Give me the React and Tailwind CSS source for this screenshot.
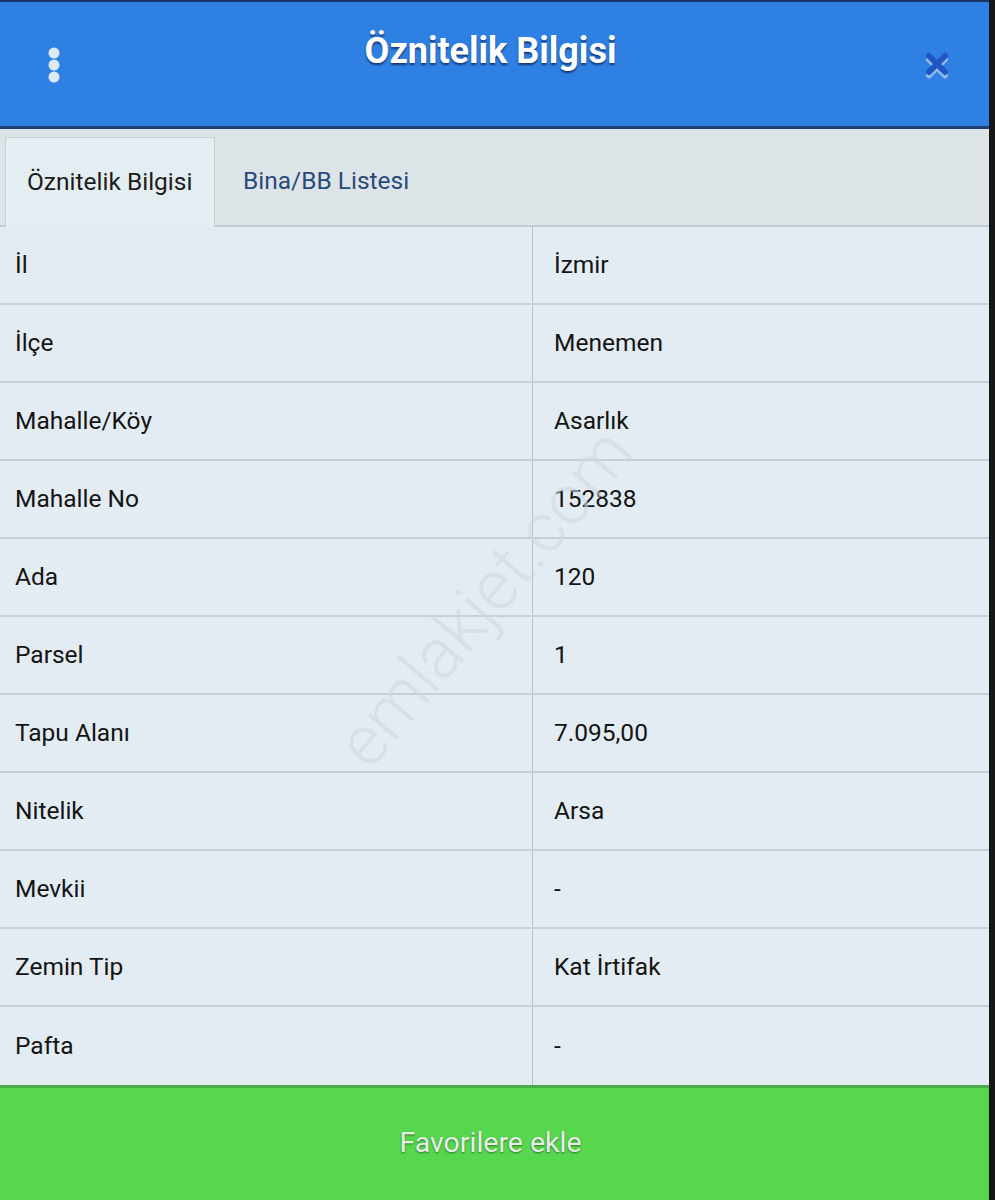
import React from 'react'

const rows = [
  ['İl', 'İzmir'],
  ['İlçe', 'Menemen'],
  ['Mahalle/Köy', 'Asarlık'],
  ['Mahalle No', '152838'],
  ['Ada', '120'],
  ['Parsel', '1'],
  ['Tapu Alanı', '7.095,00'],
  ['Nitelik', 'Arsa'],
  ['Mevkii', '-'],
  ['Zemin Tip', 'Kat İrtifak'],
  ['Pafta', '-'],
]

function KebabIcon() {
  return (
    <svg width="14" height="38" viewBox="0 0 14 38">
      <circle cx="7" cy="7" r="5.5" fill="#dce9f7" />
      <circle cx="7" cy="19" r="5.5" fill="#dce9f7" />
      <circle cx="7" cy="31" r="5.5" fill="#dce9f7" />
    </svg>
  )
}

function CloseIcon() {
  return (
    <svg width="28" height="28" viewBox="0 0 28 28">
      <path d="M5 7 L21 23 M21 7 L5 23" stroke="#8fb8ee" strokeWidth="6" strokeLinecap="round" transform="translate(0 1.5)" />
      <path d="M5 5 L21 21 M21 5 L5 21" stroke="#1f56c4" strokeWidth="6" strokeLinecap="round" />
    </svg>
  )
}

export default function App() {
  return (
    <div className="flex w-[995px] h-[1200px] bg-[#121212] overflow-hidden" style={{ fontFamily: 'Roboto, "Liberation Sans", sans-serif' }}>
      <div className="relative flex flex-col w-[989px] h-full bg-[#e3ecf2]">
        {/* header */}
        <div className="flex items-center h-[129px] bg-[#2e80e3] border-t-2 border-t-[#1b3566] border-b-[3px] border-b-[#1d3f73] px-[47px]">
          <div className="pt-[2px]">
            <KebabIcon />
          </div>
          <div className="flex-1 text-center text-white font-bold text-[36px] -mt-[27px] pr-[4px] [text-shadow:0_2px_2px_rgba(20,50,110,0.9)]">
            Öznitelik Bilgisi
          </div>
          <div className="pt-[2px] -mr-[10px]">
            <CloseIcon />
          </div>
        </div>

        {/* tabs */}
        <div className="flex items-end h-[98px] bg-[#dde4e8] border-b-2 border-b-[#c4cbd0] pl-[5px]">
          <div className="flex items-center h-[90px] w-[210px] bg-[#e4edf2] border-l border-t border-r border-[#c9d0d5] -mb-[2px] pl-[21px] text-[24.5px] text-[#1c1c1c]">
            Öznitelik Bilgisi
          </div>
          <div className="flex items-center h-[88px] pl-[28px] text-[24.5px] text-[#294a7c]">
            Bina/BB Listesi
          </div>
        </div>

        {/* attribute table */}
        <div className="flex flex-col">
          {rows.map(([label, value], i) => (
            <div
              key={label}
              className={`flex h-[78px] ${i < rows.length - 1 ? 'border-b-2 border-b-[#c8d0d6]' : ''}`}
            >
              <div className="flex items-center w-[533px] border-r border-r-[#b9c1c7] pl-[15px] text-[24.5px] text-[#141414]">
                {label}
              </div>
              <div className="flex items-center flex-1 pl-[21px] text-[24.5px] text-[#141414]">
                {value}
              </div>
            </div>
          ))}
        </div>

        {/* watermark */}
        <div className="absolute left-[185px] top-[545px] w-[600px] text-center -rotate-[50deg] text-[70px] font-light text-[#cfd9df] opacity-60 pointer-events-none select-none">
          emlakjet.com
        </div>

        {/* footer */}
        <div className="flex items-center justify-center flex-1 bg-[#56d74d] border-t-[3px] border-t-[#4aa94a] text-[28.5px] text-[#e6efe6] pb-[2px] pr-[8px] [text-shadow:0_1px_2px_rgba(40,90,40,0.8)]">
          Favorilere ekle
        </div>
      </div>
      <div className="flex-1 bg-[#161616]" />
    </div>
  )
}
